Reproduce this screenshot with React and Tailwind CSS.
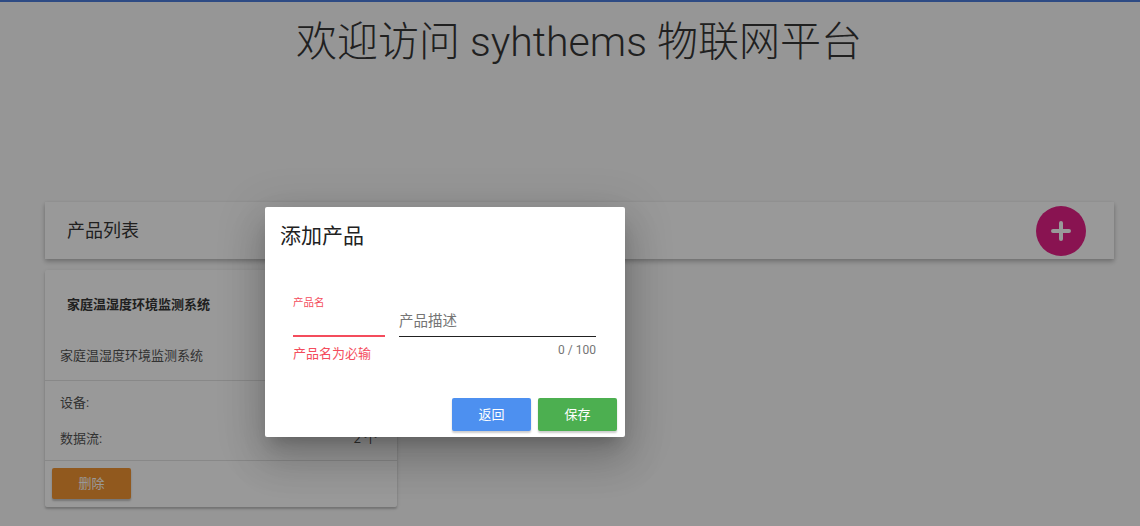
import { useState } from 'react'

const FONT = { fontFamily: 'Roboto, "Noto Sans CJK SC", sans-serif' }

function ProductCard({ name, desc, devices, streams }) {
  return (
    <div className="w-[352px] bg-white rounded-[2px] shadow-[0_2px_2px_rgba(0,0,0,0.2),0_1px_5px_rgba(0,0,0,0.12)] pb-[8px]">
      <div className="h-[69px] flex items-center px-[22px] text-[13px] font-bold text-[#212121]">{name}</div>
      <div className="h-[41px] pb-[7px] flex items-center px-[15px] text-[13px] text-[#424242]">{desc}</div>
      <div className="h-px bg-[#e0e0e0]" />
      <div className="pt-[4px] pb-[3px] px-[15px] text-[13px] text-[#424242]">
        <div className="h-[36px] flex items-center justify-between pr-[5px]">
          <span>设备:</span>
          <span>{devices} 个</span>
        </div>
        <div className="h-[36px] flex items-center justify-between pr-[5px]">
          <span>数据流:</span>
          <span>{streams} 个</span>
        </div>
      </div>
      <div className="h-px bg-[#e0e0e0]" />
      <button
        type="button"
        className="mt-[7px] ml-[7px] w-[79px] h-[31px] rounded-[2px] bg-[#f08a1c] text-white text-[13px] shadow-[0_2px_2px_rgba(0,0,0,0.25)]"
      >
        删除
      </button>
    </div>
  )
}

function AddProductDialog() {
  const [desc] = useState('')
  return (
    <div className="absolute left-[265px] top-[207px] w-[360px] h-[230px] bg-white rounded-[2px] flex flex-col shadow-[0_11px_15px_-7px_rgba(0,0,0,0.2),0_24px_38px_3px_rgba(0,0,0,0.14),0_9px_46px_8px_rgba(0,0,0,0.12)]">
      <div className="pt-[16px] px-[15px] text-[21px] leading-[26px] text-[#212121]">添加产品</div>

      <div className="mt-[46px] flex pl-[28px]">
        <div className="w-[92px]">
          <div className="h-[16px] text-[10.5px] leading-[16px] text-[#f44c5c]">产品名</div>
          <div className="h-[24px]" />
          <div className="h-[2px] bg-[#f44c5c]" />
          <div className="mt-[9px] text-[13px] leading-[16px] text-[#f44c5c] whitespace-nowrap">产品名为必输</div>
        </div>
        <div className="ml-[14px] w-[197px]">
          <div className="h-[41px] flex items-end pb-[4px] text-[14.5px] leading-[20px] text-[#757575]">产品描述</div>
          <div className="h-px bg-[#212121]" />
          <div className="mt-[5px] text-right text-[12px] leading-[16px] text-[#757575]">{desc.length} / 100</div>
        </div>
      </div>

      <div className="mt-auto flex justify-end gap-[7px] pr-[8px] pb-[6px]">
        <button type="button" className="w-[79px] h-[33px] rounded-[2px] bg-[#4d90f0] text-white text-[13px] shadow-[0_2px_2px_rgba(0,0,0,0.2)]">
          返回
        </button>
        <button type="button" className="w-[79px] h-[33px] rounded-[2px] bg-[#4caf50] text-white text-[13px] shadow-[0_2px_2px_rgba(0,0,0,0.2)]">
          保存
        </button>
      </div>
    </div>
  )
}

export default function App() {
  return (
    <div className="relative w-[1140px] h-[526px] overflow-hidden bg-[#fafafa]" style={FONT}>
      <div className="h-[2px] bg-[#3a6fd8]" />

      <h1 className="mt-[17px] pl-[18px] text-center text-[41px] leading-[46px] font-light text-[#212121]">
        欢迎访问 syhthems 物联网平台
      </h1>

      <div className="mt-[137px] pl-[45px] pr-[26px]">
        {/* Header */}
        <div className="h-[57px] bg-white flex items-center justify-between pl-[22px] pr-[28px] shadow-[0_3px_5px_rgba(0,0,0,0.22),0_1px_4px_rgba(0,0,0,0.12)]">
          <span className="text-[18px] text-[#212121]">产品列表</span>
          <button type="button" className="w-[50px] h-[50px] rounded-full bg-[#e2097a] flex items-center justify-center">
            <svg width="20" height="20" viewBox="0 0 20 20">
              <path d="M10 2v16M2 10h16" stroke="white" strokeWidth="4" strokeLinecap="round" />
            </svg>
          </button>
        </div>

        <div className="mt-[11px]">
          <ProductCard name="家庭温湿度环境监测系统" desc="家庭温湿度环境监测系统" devices={1} streams={2} />
        </div>
      </div>

      {/* Overlay */}
      <div className="absolute inset-0 bg-[#212121]/[0.46]" />
      <AddProductDialog />
    </div>
  )
}
